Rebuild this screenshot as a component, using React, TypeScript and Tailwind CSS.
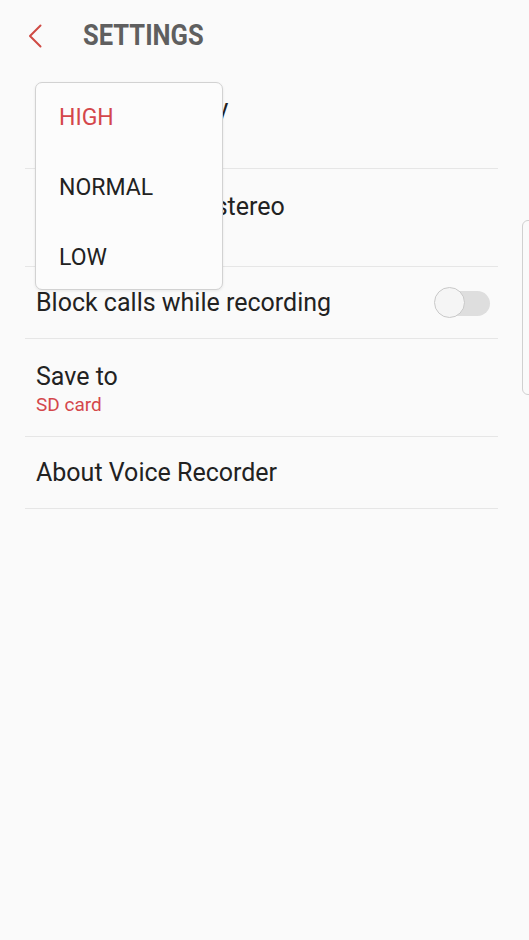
import React from 'react';

const FONT = { fontFamily: 'Roboto, "Noto Sans", sans-serif' };

function Divider() {
  return <div className="h-px bg-[#e6e6e6]" />;
}

function Toggle() {
  return (
    <div className="relative h-[32px] w-[58px]">
      <div className="absolute left-[11px] top-[4px] h-[25px] w-[45px] rounded-full bg-[#dedede]" />
      <div className="absolute left-0 top-0 h-[31px] w-[31px] rounded-full border-[1.5px] border-[#c9c9c9] bg-[#f5f5f5]" />
    </div>
  );
}

export default function App() {
  return (
    <div className="relative h-[940px] w-[529px] overflow-hidden bg-[#fafafa]" style={FONT}>
      {/* Header */}
      <div className="flex h-[71px] items-center">
        <div className="ml-[28px] flex h-[24px] w-[14px] items-center">
          <svg width="14" height="24" viewBox="0 0 14 24" fill="none">
            <path d="M12.5 1.5 L2 12 L12.5 22.5" stroke="#cf4a44" strokeWidth="2" strokeLinecap="round" strokeLinejoin="round" />
          </svg>
        </div>
        <h1 className="ml-[41px] origin-left scale-x-88 text-[29px] font-bold tracking-[0px] text-[#5f5f5f]">SETTINGS</h1>
      </div>

      {/* List */}
      <div className="ml-[25px] w-[473px]">
        <div className="flex h-[97px] flex-col justify-center pl-[11px] pt-[4px]">
          <span className="text-[25px] leading-[30px] text-[#222]">Recording quality</span>
          <span className="text-[19px] leading-[25px] text-[#d4474b]">High</span>
        </div>
        <Divider />
        <div className="flex h-[97px] flex-col justify-center pl-[11px] pt-[4px]">
          <span className="text-[25px] leading-[30px] text-[#222]">Record audio in stereo</span>
          <span className="text-[19px] leading-[25px] text-[#8a8a8a]">Off</span>
        </div>
        <Divider />
        <div className="flex h-[71px] items-center justify-between pl-[11px] pr-[6px]">
          <span className="text-[25px] text-[#222]">Block calls while recording</span>
          <Toggle />
        </div>
        <Divider />
        <div className="flex h-[97px] flex-col justify-center pl-[11px] pt-[4px]">
          <span className="text-[25px] leading-[30px] text-[#222]">Save to</span>
          <span className="text-[19px] leading-[25px] text-[#d4474b]">SD card</span>
        </div>
        <Divider />
        <div className="flex h-[71px] items-center pl-[11px]">
          <span className="text-[25px] text-[#222]">About Voice Recorder</span>
        </div>
        <Divider />
      </div>

      {/* Quality popup */}
      <div className="absolute left-[35px] top-[82px] flex h-[208px] w-[188px] flex-col overflow-hidden rounded-[7px] border border-[#d2d2d2] bg-[#fcfcfc] shadow-[0_1px_3px_rgba(0,0,0,0.08)]">
        <div className="flex h-[70px] shrink-0 items-center pl-[23px] text-[23px] text-[#d4474b]">HIGH</div>
        <div className="flex h-[70px] shrink-0 items-center pl-[23px] text-[23px] text-[#222]">NORMAL</div>
        <div className="flex h-[70px] shrink-0 items-center pl-[23px] text-[23px] text-[#222]">LOW</div>
      </div>

      {/* Edge panel handle */}
      <div className="absolute left-[522px] top-[220px] h-[175px] w-[20px] rounded-[6px] border border-[#d0d0d0] bg-[#fafafa]" />
    </div>
  );
}
